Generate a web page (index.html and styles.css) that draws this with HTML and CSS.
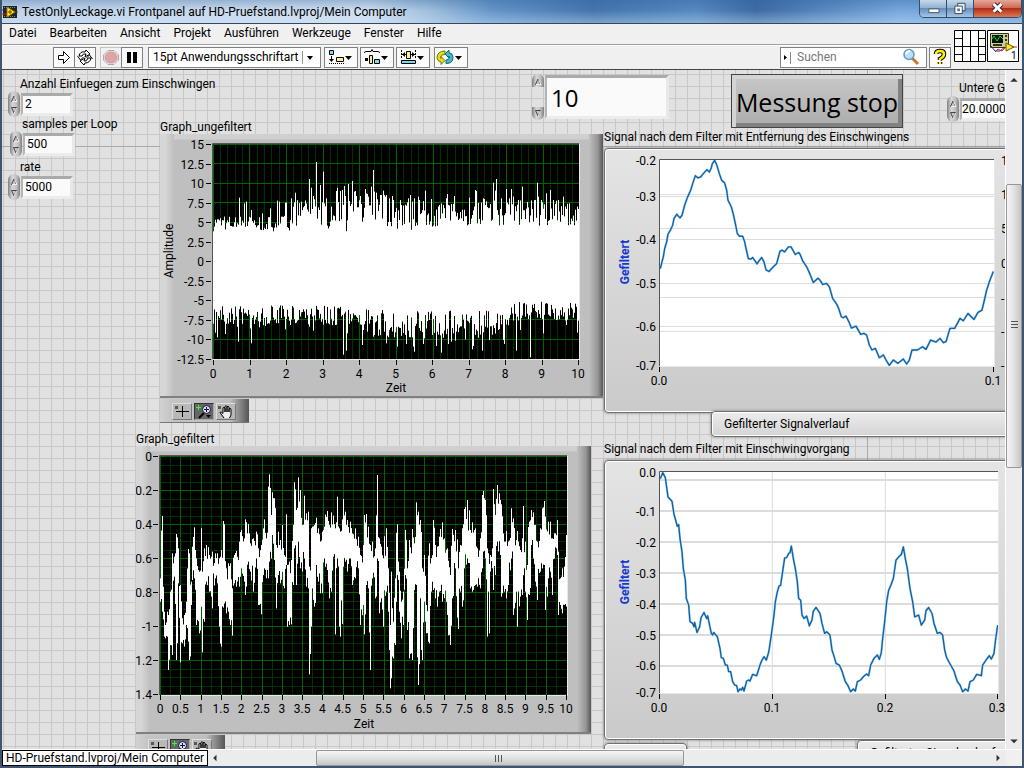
FILE: index.html
```html
<!DOCTYPE html>
<html lang="de">
<head>
    <meta charset="utf-8">
    <meta name="viewport" content="width=device-width, initial-scale=1">
    <link rel="stylesheet" href="styles.css">
    <title>TestOnlyLeckage.vi Frontpanel</title>
</head>
<body>
<svg class="defs" aria-hidden="true">
    <symbol id="up" viewBox="0 0 12 12"><path d="M3.500 9.500L6 4L8.500 9.500Z" fill="#c8c8c8" stroke="#444"/><path d="M4 9.500h5L6.500 4.500" fill="none" stroke="#eee"/></symbol>
    <symbol id="down" viewBox="0 0 12 12"><path d="M3.500 2.500L6 8L8.500 2.500Z" fill="#c8c8c8" stroke="#444"/><path d="M8.500 3L6 8.500" stroke="#eee"/></symbol>
    <symbol id="cross" viewBox="0 0 18 15"><path d="M2 2h3v3h-3z" fill="#4a6640"/><path d="M9.500 2v4M9.500 9v4M3 7.500h5M11 7.500h5M8 7.500h3M9.500 6v3" stroke="#000"/></symbol>
    <symbol id="lens" viewBox="0 0 18 15"><path d="M3.500 1v5M1 3.500h5" stroke="#3f2"/><path d="M9 9L4 14" stroke="#000" stroke-width="2"/><circle cx="11.500" cy="5.500" r="4" fill="#dde" stroke="#114"/><path d="M9 5.500h5M11.500 3v5" stroke="#114"/><path d="M11 11h5l-2.500 3z"/></symbol>
    <symbol id="hand" viewBox="0 0 18 15"><path d="M1 2h3v3h-3z" fill="#4a6640"/><path d="M7 14L3 8.500q1-1.500 3 1V4q1-1.500 2 0v4V2.500q1-1.500 2 0V8V3q1-1.500 2 0v5V5q1-1.500 2 0v6l-1.500 3" fill="#eee" stroke="#000"/></symbol>
</svg>
<div class="window">
    <header class="titlebar">
        <svg class="appIcon" viewBox="0 0 16 16"><path d="M1 2h14v12h-14z" fill="#222"/><path d="M2 3.500h12M2 12.500h12" stroke="#796" stroke-dasharray="1 1"/><path d="M0 6h5" stroke="#22c"/><path d="M0 10h5" stroke="#d22"/><path d="M5 3L13 8L5 13Z" fill="#fe2" stroke="#970"/><path d="M6 8h4M8 6v4M13 8h3" stroke="#640"/></svg>
        <h1>TestOnlyLeckage.vi Frontpanel auf HD-Pruefstand.lvproj/Mein Computer</h1>
        <div class="winButtons">
            <button aria-label="Minimieren"><svg viewBox="0 0 28 17"><path d="M9.500 8.500h11v4h-11z" fill="#fff" stroke="#456"/></svg></button>
            <button aria-label="Wiederherstellen"><svg viewBox="0 0 28 17"><path d="M11.500 2.500h8v8h-8z" fill="#def" stroke="#345"/><path d="M8.500 5.500h8v8h-8z" fill="#fff" stroke="#345"/><path d="M11 8h3v3h-3z" fill="#678"/></svg></button>
            <button class="close" aria-label="Schließen"><svg viewBox="0 0 48 17"><path d="M20 4l8 8M28 4l-8 8" stroke="#423" stroke-width="5"/><path d="M20 4l8 8M28 4l-8 8" stroke="#fff" stroke-width="3"/></svg></button>
        </div>
    </header>
    <div class="bars">
        <div class="barStack">
            <nav class="menu">
                <a href="#">Datei</a><a href="#">Bearbeiten</a><a href="#">Ansicht</a><a href="#">Projekt</a><a href="#">Ausführen</a><a href="#">Werkzeuge</a><a href="#">Fenster</a><a href="#">Hilfe</a>
            </nav>
            <div class="toolbar">
                <div class="group">
                    <button aria-label="Ausführen"><svg viewBox="0 0 20 19"><path d="M4.500 7.500h5v-4l6 6l-6 6v-4h-5z" fill="#fff" stroke="#000"/></svg></button>
                    <button aria-label="Wiederholt ausführen"><svg viewBox="0 0 20 19"><path d="M4 8q1-5 6-4l1-2l4 4l-5 3l1-3q-3-1-4 2zM16 10q-1 5-6 5l-1 2l-4-4l5-3l-1 3q3 1 4-3zM2.500 8l3 4l3-3M17.500 11l-3-4l-3 3" fill="#fff" stroke="#000"/></svg></button>
                </div>
                <div class="group">
                    <button class="dim" aria-label="Abbrechen"><svg viewBox="0 0 20 19"><path d="M7 2.500h6l4.500 4.500v5l-4.500 4.500h-6l-4.500-4.500v-5z" fill="#fff" stroke="#aaa"/><path d="M7.500 4h5l3.500 3.500v4l-3.500 3.500h-5l-3.500-3.500v-4z" fill="#dda5a5" stroke="#c99"/></svg></button>
                    <button aria-label="Pause"><svg viewBox="0 0 20 19"><path d="M5 4h4v11h-4zM11 4h4v11h-4z"/></svg></button>
                </div>
                <div class="fontBox">
                    <select aria-label="Schriftart"><option>15pt Anwendungsschriftart</option></select>
                </div>
                <button class="drop" aria-label="Objekte ausrichten"><svg viewBox="0 0 32 19"><path d="M4.500 2.500h4v4h-4z" fill="#7de" stroke="#000"/><path d="M6.500 8v5" stroke="#000"/><path d="M4 11h5l-2.500 3z"/><path d="M4 15.500h15" stroke="#000" stroke-dasharray="1 1"/><path d="M11.500 9.500h7v4h-7z" fill="#fe8" stroke="#000"/><path d="M20 8h7l-3.500 4z"/></svg></button>
                <button class="drop" aria-label="Objekte verteilen"><svg viewBox="0 0 32 19"><path d="M3 4.500l2-1h5l1-2l1 2h5l2 1" fill="none" stroke="#000"/><path d="M4 10h3v3h-3z"/><path d="M8.500 7.500h3v8h-3z" fill="#fe8" stroke="#000"/><path d="M13.500 11.500h5v4h-5z" fill="#7de" stroke="#000"/><path d="M20 8h7l-3.500 4z"/></svg></button>
                <button class="drop" aria-label="Objektgröße ändern"><svg viewBox="0 0 32 19"><path d="M4.500 2v9M18.500 2v9" stroke="#000" stroke-dasharray="2 1"/><path d="M5 6.500h4M14 6.500h4" stroke="#000"/><path d="M8 4v5l-3-2.500zM15 4v5l3-2.500z"/><path d="M9.500 3.500h4v7h-4z" fill="#fe8" stroke="#000"/><path d="M4.500 12.500h14v3h-14z" fill="#7de" stroke="#000"/><path d="M20 8h7l-3.500 4z"/></svg></button>
                <button class="drop last" aria-label="Neu ordnen"><svg viewBox="0 0 32 19"><path d="M10 3q-8 0-8 7q0 3 4 4v2.500l4-4l-4-4v2q-1-4 4-4z" fill="#dd2" stroke="#770"/><path d="M11 15.500q7 0 7-6q0-4-4-5v-2.500l-4 4l4 4v-2q2 3-3 4z" fill="#4bc" stroke="#167"/><path d="M20 8h7l-3.500 4z"/></svg></button>
                <div class="search">
                    <svg viewBox="0 0 10 19"><path d="M3 7l3 2.500l-3 2.500z"/><path d="M9.500 4v12" stroke="#888"/></svg>
                    <input type="search" placeholder="Suchen" aria-label="Suchen">
                    <svg class="glass" viewBox="0 0 18 18"><path d="M10 10l6 6" stroke="#c73" stroke-width="3"/><circle cx="7" cy="6.500" r="5" fill="#bdf" stroke="#69b" stroke-width="1.500"/><path d="M4 6q1-3 4-3" stroke="#fff" stroke-width="2" fill="none"/></svg>
                </div>
                <button class="help" aria-label="Kontexthilfe"><svg viewBox="0 0 20 19"><path d="M6 6q0-3 4-3t4 3t-4 5v1M10 14v2" fill="none" stroke="#000" stroke-width="4.500"/><path d="M6 6q0-3 4-3t4 3t-4 5v1M10 14v2" fill="none" stroke="#fe0" stroke-width="2.500"/></svg></button>
            </div>
        </div>
        <div class="viIcons">
            <svg viewBox="0 0 32 32"><path d="M.5 .5h31v31h-31z" fill="#fff" stroke="#000"/><path d="M8.500 1v30M16.500 1v30M24.500 1v30M1 16.500h30M1 8.500h7M1 24.500h7M25 8.500h6M25 24.500h6" stroke="#000"/></svg>
            <svg viewBox="0 0 32 32"><path d="M.5 .5h31v31h-31z" fill="#fff" stroke="#000"/><path d="M3.500 3.500h18v14h-18z" fill="#cc9" stroke="#331"/><path d="M5 5h11v8h-11z" fill="#010"/><path d="M5 9l2-3l3 5l3-5l3 3" fill="none" stroke="#0d3"/><path d="M18 6h2M18 10h2M6 15h9" stroke="#331" stroke-width="2"/><path d="M4 16l4 5h5l5-4" fill="none" stroke="#22a"/><path d="M8 22l3-3l4 2l4-4h11" fill="none" stroke="#d22"/><path d="M19 13v8l8-4z" fill="#ee2" stroke="#650"/><text x="24" y="29">1</text></svg>
        </div>
    </div>
    <main class="workspace">
        <div class="canvas">
            <i class="originRow"></i><i class="originCol"></i>

            <div class="object numeric n1">
                <label for="anzahl">Anzahl Einfuegen zum Einschwingen</label>
                <div class="row">
                    <span class="spin"><button aria-label="Mehr"><svg><use href="#up"/></svg></button><button aria-label="Weniger"><svg><use href="#down"/></svg></button></span>
                    <input id="anzahl" type="text" value="2">
                </div>
            </div>
            <div class="object numeric n2">
                <label for="samples">samples per Loop</label>
                <div class="row">
                    <span class="spin"><button aria-label="Mehr"><svg><use href="#up"/></svg></button><button aria-label="Weniger"><svg><use href="#down"/></svg></button></span>
                    <input id="samples" type="text" value="500">
                </div>
            </div>
            <div class="object numeric n3">
                <label for="rate">rate</label>
                <div class="row">
                    <span class="spin"><button aria-label="Mehr"><svg><use href="#up"/></svg></button><button aria-label="Weniger"><svg><use href="#down"/></svg></button></span>
                    <input id="rate" type="text" value="5000">
                </div>
            </div>
            <div class="object numeric n4">
                <label for="untere">Untere Grenzfrequenz</label>
                <div class="row">
                    <span class="spin"><button aria-label="Mehr"><svg><use href="#up"/></svg></button><button aria-label="Weniger"><svg><use href="#down"/></svg></button></span>
                    <input id="untere" type="text" value="20.0000">
                </div>
            </div>
            <div class="object numeric big">
                <div class="row">
                    <span class="spin"><button aria-label="Mehr"><svg><use href="#up"/></svg></button><button aria-label="Weniger"><svg><use href="#down"/></svg></button></span>
                    <input type="text" value="10" aria-label="Anzahl">
                </div>
            </div>
            <button class="object stop">Messung stop</button>

            <section class="object g1">
                <h2>Graph_ungefiltert</h2>
                <svg class="chart classic" id="chart1" viewBox="160 134 443 264"></svg>
                <div class="palette">
                    <button aria-label="Cursor"><svg><use href="#cross"/></svg></button><button class="on" aria-label="Zoom"><svg><use href="#lens"/></svg></button><button aria-label="Verschieben"><svg><use href="#hand"/></svg></button>
                </div>
            </section>
            <section class="object g2">
                <h2>Graph_gefiltert</h2>
                <svg class="chart classic" id="chart2" viewBox="136 446 455 288"></svg>
                <div class="palette">
                    <button aria-label="Cursor"><svg><use href="#cross"/></svg></button><button class="on" aria-label="Zoom"><svg><use href="#lens"/></svg></button><button aria-label="Verschieben"><svg><use href="#hand"/></svg></button>
                </div>
            </section>
            <section class="object g3">
                <h2>Signal nach dem Filter mit Entfernung des Einschwingens</h2>
                <svg class="chart modern" id="chart3" viewBox="605 149 432 263"></svg>
                <div class="legend">Gefilterter Signalverlauf</div>
            </section>
            <section class="object g4">
                <h2>Signal nach dem Filter mit Einschwingvorgang</h2>
                <svg class="chart modern" id="chart4" viewBox="605 461 432 278"></svg>
                <div class="legendRow"><div class="legend blank"></div><div class="legend">Gefilterter Signalverlauf</div></div>
            </section>
        </div>
        <div class="scroll vertical">
            <button aria-label="Nach oben"><svg viewBox="0 0 15 17"><path d="M4 11h7l-3.500-3.500z"/></svg></button>
            <div class="track"><div class="thumb"></div></div>
            <button aria-label="Nach unten"><svg viewBox="0 0 15 17"><path d="M4 7h7l-3.500 3.500z"/></svg></button>
        </div>
        <div class="bottom">
            <div class="target">HD-Pruefstand.lvproj/Mein Computer</div>
            <div class="scroll horizontal">
                <button aria-label="Nach links"><svg viewBox="0 0 17 17"><path d="M9 4v7l-3.500-3.500z"/></svg></button>
                <div class="track"><div class="thumb"></div></div>
                <button aria-label="Nach rechts"><svg viewBox="0 0 17 17"><path d="M7 4v7l3.500-3.500z"/></svg></button>
            </div>
        </div>
    </main>
</div>
<script src="charts.js"></script>
</body>
</html>
```
FILE: styles.css
```css
html, body { height: 100%; margin: 0; }
body { font-family: Roboto, "Open Sans", sans-serif; font-size: 12px; color: #000; overflow: hidden; }
* { box-sizing: border-box; }
button, input, select { font: inherit; color: inherit; margin: 0; padding: 0; border: 0; border-radius: 0; background: none; outline: 0; }
svg { display: block; }
h1, h2 { margin: 0; font-weight: normal; font-size: 12px; white-space: nowrap; }
.defs { position: absolute; width: 0; height: 0; }

.window { height: 100vh; display: flex; flex-direction: column; border: solid #40566e; border-width: 0 2px 2px; background: #f0f0f0; }

/* title bar */
.titlebar { height: 24px; flex: none; display: flex; align-items: center; gap: 4px; border-bottom: 1px solid #34495f; background: linear-gradient(#2f5f9a55, #ffffff00 45%, #cfe4f866), linear-gradient(90deg, #c0d3e8, #cfdff0 36%, #9dbddc 42%, #6495c8 48%, #4375ae 58%, #5689c0 68%, #3c6ba5 74%, #76a8dc 88%, #6b9fd6); }
.appIcon { width: 16px; height: 16px; }
.titlebar h1 { flex: 1; }
.winButtons { display: flex; align-self: flex-start; height: 18px; border: 1px solid #334e6c; border-top: 0; border-radius: 0 0 5px 5px; overflow: hidden; }
.winButtons button { width: 27px; border-right: 1px solid #334e6c; background: linear-gradient(#c6d8ea, #94b3d2 45%, #6890bb 50%, #a5c6e6); }
.winButtons .close { width: 47px; border: 0; background: linear-gradient(#e6a898, #cf6a56 45%, #b52c18 50%, #dc7a52); }

/* menu and toolbar */
.bars { display: flex; flex: none; height: 46px; border-bottom: 1px solid #444; }
.barStack { flex: 1; display: flex; flex-direction: column; }
.menu { height: 21px; display: flex; align-items: center; gap: 13px; padding: 0 7px 2px; border-bottom: 1px solid #a0a0a0; }
.menu a { color: #000; text-decoration: none; }
.toolbar { flex: 1; display: flex; align-items: center; padding: 0 0 1px 51px; border-top: 1px solid #fff; }
.toolbar button, .fontBox, .search { height: 21px; border: 1px solid #808080; background: #fafafa; }
.toolbar svg { flex: none; height: 19px; }
.group { display: flex; margin-right: 4px; }
.group button { width: 22px; }
.group button + button { margin-left: -1px; }
.group .dim { border-color: #c4c4c4; background: #f2f2f2; }
.group + .group { margin-right: 5px; }
.group svg { width: 20px; }
.fontBox { width: 173px; position: relative; margin-right: 3px; background: #fff; }
.fontBox select { appearance: none; width: 100%; height: 19px; padding: 0 4px; }
.fontBox::before { content: ""; position: absolute; right: 17px; top: 3px; height: 13px; border-left: 1px solid #999; }
.fontBox::after { content: ""; position: absolute; right: 7px; top: 8px; border: solid transparent; border-width: 4px 3px 0; border-top-color: #000; }
.drop { width: 34px; margin-right: 2px; }
.drop.last { margin-left: 2px; }
.drop svg { width: 32px; }
.search { width: 147px; display: flex; align-items: center; margin-left: auto; margin-right: 2px; background: #fff; }
.search svg { width: 10px; }
.search input { flex: 1; min-width: 0; padding: 0 6px; appearance: none; }
.search input::placeholder { color: #777; opacity: 1; }
.search .glass { width: 18px; height: 18px; margin-right: 6px; }
.help { width: 22px; }
.viIcons { display: flex; gap: 1px; padding: 6px 3px 0; }
.viIcons svg { width: 32px; height: 32px; }
.viIcons text { font-size: 10px; }

/* front panel */
.workspace { flex: 1; min-height: 0; display: grid; grid-template: minmax(0, 1fr) 17px / minmax(0, 1fr) 17px; }
.canvas { position: relative; overflow: hidden; background: linear-gradient(#c8c8c8 1px, transparent 1px) 0 4px / 12px 12px, linear-gradient(90deg, #c8c8c8 1px, transparent 1px) 1px 0 / 12px 12px, #e1e1e1; }
.originRow, .originCol { position: absolute; background: #aaa; }
.originRow { left: 0; right: 0; top: 76px; height: 1px; }
.originCol { top: 0; bottom: 0; left: 865px; width: 1px; }
.object { position: absolute; }

.numeric label { display: block; height: 14px; line-height: 14px; padding-left: 12px; white-space: nowrap; }
.row { display: flex; align-items: center; }
.spin { display: flex; flex-direction: column; justify-content: space-between; height: 26px; width: 12px; margin-right: 1px; }
.spin button { height: 13px; width: 12px; background: linear-gradient(90deg, #808080, #d8d8d8 35%, #c0c0c0 70%, #808080); }
.spin button:first-child { border-radius: 6px 6px 0 0; }
.spin button:last-child { border-radius: 0 0 6px 6px; }
.spin svg { width: 12px; height: 12px; }
.numeric input { width: 52px; height: 23px; padding: 0 2px; border: solid; border-width: 3px 3px 3px 2px; border-color: #aaa #e8e8e8 #ececec #b4b4b4; background: #fafafa; }
.n1 { left: 6px; top: 7px; }
.n2 { left: 8px; top: 47px; }
.n3 { left: 6px; top: 90px; }
.n4 { left: 945px; top: 11px; }
.n4 .row { margin-top: 1px; }
.n4 input { width: 90px; padding: 0; }
.big { left: 530px; top: 4px; }
.big .spin { height: 46px; }
.big input { width: 124px; height: 44px; padding-left: 4px; font-family: "Open Sans", sans-serif; font-size: 24px; }
.stop { left: 729px; top: 4px; width: 172px; height: 54px; padding-top: 2px; border: 1px solid #444; box-shadow: inset 4px 4px 0 #d4d4d4, inset -4px -4px 0 #828282; background: linear-gradient(#c8c8c8, #acacac); font-family: "Open Sans", sans-serif; font-size: 25px; white-space: nowrap; }

section h2 { height: 16px; line-height: 18px; }
.chart { overflow: hidden; }
.chart text { font-size: 12px; }
.classic { background: linear-gradient(#808080, #808080) bottom / 100% 2px no-repeat, linear-gradient(90deg, #d6d6d6 0 5px, #bfbfbf 14px) no-repeat left / 14px 100%, linear-gradient(270deg, #555, #959595 5px, #bfbfbf 14px) no-repeat right / 14px 100%, linear-gradient(#d0d0d0 5px, #bfbfbf 6px); }
.g1 { left: 158px; top: 48px; }
.g2 { left: 134px; top: 360px; }
.g1 .chart { width: 443px; height: 264px; }
.g2 .chart { width: 455px; height: 288px; }
.palette { display: flex; gap: 2px; width: 89px; height: 24px; margin-top: 1px; padding: 4px 0 0 12px; background: linear-gradient(90deg, #d2d2d2, #c4c4c4 12px, #bfbfbf 70px, #555); border-bottom: 1px solid #777; }
.palette button { width: 20px; height: 17px; border: 1px solid; border-color: #ddd #777 #777 #ddd; background: #b8b8b8; }
.palette .on { background: #666; border-color: #333 #aaa #aaa #333; }
.palette svg { width: 18px; height: 15px; }

.g3 { left: 602px; top: 59px; }
.g4 { left: 602px; top: 371px; }
.g3 h2, .g4 h2 { height: 19px; line-height: 16px; }
.modern, .legend { border: 1px solid #707070; border-radius: 4px; box-shadow: inset 0 0 0 1px #fff, 0 0 3px #777; background: linear-gradient(#e4e4e4, #cacaca); }
.modern { width: 434px; }
.g3 .chart { height: 265px; }
.g4 .chart { height: 280px; }
.modern .axisTitle { font-weight: bold; fill: #1438d0; }
.legend { position: relative; width: 327px; height: 26px; line-height: 24px; margin: -2px 0 0 107px; padding-left: 12px; background: linear-gradient(#ececec, #d4d4d4); }
.legendRow { display: flex; }
.legendRow .legend { margin: 0 0 0 170px; width: 180px; }
.legendRow .blank { width: 83px; margin: 3px 0 0; }

/* scroll bars */
.scroll { display: flex; background: #ececec; }
.scroll button { flex: none; width: 16px; height: 17px; }
.scroll svg { fill: #333; }
.track { flex: 1; position: relative; }
.thumb { position: absolute; border: 1px solid #979797; border-radius: 2px; }
.vertical { flex-direction: column; border-left: 1px solid #fff; }
.vertical .thumb { left: 0; right: 0; top: 15%; height: 44%; background: repeating-linear-gradient(#555 0 1px, transparent 1px 3px) center / 7px 9px no-repeat, linear-gradient(90deg, #f6f6f6, #e2e2e2 50%, #c6c6c6); }
.bottom { grid-column: 1 / -1; display: flex; padding-right: 16px; background: #f0f0f0; border-top: 1px solid #fff; }
.target { border: 1px solid #000; background: #fff; line-height: 14px; padding: 0 3px; white-space: nowrap; }
.horizontal { flex: 1; }
.horizontal .thumb { top: 0; bottom: 0; left: 12%; width: 48%; background: repeating-linear-gradient(90deg, #555 0 1px, transparent 1px 3px) center / 9px 7px no-repeat, linear-gradient(#f6f6f6, #e2e2e2 50%, #c6c6c6); }
```
FILE: charts.js
```js
// Traces are stored in thirds of a pixel, axes and labels in pixels.

const NS = "http://www.w3.org/2000/svg";

function add(parent, tag, attrs, text) {
    let el = document.createElementNS(NS, tag);
    for (let key in attrs) el.setAttribute(key, attrs[key]);
    if (text !== undefined) el.textContent = text;
    parent.appendChild(el);
    return el;
}

// Repeatable noise
let seed = 7;
function rnd() {
    seed = (seed * 16807) % 2147483647;
    return seed / 2147483647;
}

function plotArea(svg, x, y, w, h, box, fill) {
    add(svg, "rect", {x: x, y: y, width: w + 1, height: h + 1, fill: "#e8e8e8"});
    add(svg, "path", {d: `M${x - .5} ${y + h}V${y - .5}H${x + w}`, fill: "none", stroke: "#555"});
    add(svg, "rect", {x: x, y: y, width: w, height: h, fill: fill});
    return add(svg, "svg", {x: x, y: y, width: w, height: h, viewBox: box, preserveAspectRatio: "none"});
}

function gridLines(plot, list, vertical, color, width) {
    let d = list.map(v => vertical ? `M${v} 0V900` : `M0 ${v}H1400`).join("");
    add(plot, "path", {d: d, stroke: color, "stroke-width": width, "shape-rendering": "crispEdges"});
}

function yLabels(svg, right, labels, tick) {
    for (let [text, y] of labels) {
        add(svg, "text", {x: right, y: y + 5, "text-anchor": "end"}, text);
        if (tick) add(svg, "path", {d: `M${tick} ${y + .5}h5`, stroke: "#000"});
    }
}

function xLabels(svg, y, labels) {
    for (let [text, x] of labels) {
        add(svg, "text", {x: x, y: y + 13, "text-anchor": "middle"}, text);
        add(svg, "path", {d: `M${Math.round(x) + .5} ${y - 5}v5`, stroke: "#000"});
    }
}

function axisTitle(svg, x, y, text) {
    add(svg, "text", {class: "axisTitle", transform: `translate(${x} ${y}) rotate(-90)`, "text-anchor": "middle"}, text);
}

function range(n, f) {
    return Array.from({length: n}, (_, i) => f(i));
}

function trace(plot, points) {
    let attrs = {points: points, fill: "none", "stroke-linejoin": "round"};
    add(plot, "polyline", {...attrs, stroke: "#b8d4ea", "stroke-width": 7});
    add(plot, "polyline", {...attrs, stroke: "#0a62a8", "stroke-width": 4});
}

/**
 * Unfiltered graph: dense noise band with peaks
 */

function drawRaw() {
    let svg = document.getElementById("chart1");
    let plot = plotArea(svg, 213, 144, 366, 215, "249 42 1098 645", "#000");
    gridLines(plot, range(50, i => 249 + i * 22), true, "#003200", 3);
    gridLines(plot, range(10, i => 249 + i * 110), true, "#006400", 3);
    gridLines(plot, range(11, i => 43 + i * 58.5), false, "#006400", 3);

    let top = [328,203,343,220,349,215,364,240,397,250,421,235,442,212,448,215,466,218,469,218,482,205,490,230,496,188,514,215,523,228,538,147,544,173,550,198,553,208,559,96,568,240,571,165,580,125,583,220,589,205,604,230,619,183,622,173,631,183,637,180,643,168,646,198,655,162,658,213,667,153,673,185,676,183,679,198,691,198,694,222,706,177,709,190,712,192,715,200,724,170,730,120,733,185,739,188,742,208,751,195,754,195,760,182,763,195,766,200,769,195,778,205,787,198,790,210,811,210,835,205,841,195,853,205,865,200,868,210,886,182,904,207,949,205,952,192,964,222,973,198,1018,203,1036,180,1039,183,1060,205,1063,207,1090,158,1096,182,1099,147,1114,205,1129,177,1138,205,1144,177,1150,200,1165,210,1177,170,1216,210,1222,158,1225,200,1234,210,1249,190,1261,180,1270,210,1285,210,1300,200,1318,220,1342,230];
    let low = [256,608,262,622,286,612,322,590,325,635,361,595,364,640,388,592,406,588,466,598,481,585,538,590,550,602,595,580,616,585,640,674,649,662,652,610,697,645,700,600,712,605,730,620,763,605,769,640,800,610,802,650,829,642,850,650,853,665,880,642,883,625,919,648,934,668,955,642,964,635,976,632,1006,628,1027,658,1030,648,1057,662,1078,630,1105,600,1120,630,1123,642,1159,662,1171,600,1201,682,1240,610,1309,585,1342,608];
    let peaks = list => {
        let map = {};
        for (let i = 0; i < list.length; i += 2) map[Math.round((list[i] - 249) / 3)] = list[i + 1];
        return map;
    };
    let topMap = peaks(top), lowMap = peaks(low), d = "";
    for (let i = 0; i < 366; i++) {
        let hi = topMap[i] || (i < 80 ? 304 - rnd() * 48 : 290 - rnd() * 80 + (rnd() < .1 ? 14 : 0));
        let b = i < 160 ? 526 : i < 280 ? 540 : i < 300 ? 530 : 514;
        let lo = lowMap[i] || b + rnd() * (i < 160 || i > 300 ? 60 : 86);
        d += `M${250.5 + i * 3} ${hi}V${lo}`;
    }
    add(plot, "path", {d: d, stroke: "#fff", "stroke-width": 3});

    yLabels(svg, 204, range(12, i => [String(15 - i * 2.5), Math.round(144 + i * 19.5)]), 206);
    xLabels(svg, 365, range(11, i => [String(i), 213 + i * 36.5]));
    axisTitle(svg, 173, 251, "Amplitude");
    add(svg, "text", {x: 396, y: 392, "text-anchor": "middle"}, "Zeit");
}

/**
 * Filtered graph: one [x, high, low] triple per burst
 */

function drawFiltered() {
    let svg = document.getElementById("chart2");
    let plot = plotArea(svg, 160, 456, 407, 239, "90 93 1221 717", "#000");
    gridLines(plot, range(41, i => 91 + i * 30.5), true, "#003200", 3);
    gridLines(plot, range(29, i => 95 + i * 25.5), false, "#003200", 3);
    gridLines(plot, range(21, i => 91 + i * 61), true, "#006400", 3);
    gridLines(plot, range(7, i => 95 + i * 102), false, "#006400", 3);

    let data = [
        92,460,530, 96,273,560, 102,560,635, 106,600,640, 112,560,635, 116,570,735, 121,500,660, 127,385,690, 133,395,455, 138,327,705,
        146,370,475, 151,480,712, 158,580,655, 164,570,665, 170,530,600, 176,372,650, 179,385,705, 184,470,540, 188,365,465, 194,307,460,
        200,400,600, 208,440,625, 213,310,545, 217,440,682, 223,370,590, 230,360,470, 237,390,500, 243,395,515, 248,380,550, 255,385,460,
        262,385,475, 269,400,605, 274,375,665, 281,288,548, 288,430,565, 295,415,560, 301,415,600, 307,490,632, 313,390,475, 320,378,485,
        328,350,485, 334,315,430, 342,340,470, 347,283,510, 354,297,410, 362,355,440, 370,340,500, 378,320,400, 384,370,540, 394,360,568,
        400,310,450, 404,283,430, 410,340,460, 414,185,460, 418,148,410, 423,270,400, 428,202,330, 434,220,405, 440,360,550, 446,320,450,
        452,345,475, 458,300,440, 463,390,490, 468,268,420, 472,420,605, 478,410,600, 485,405,598, 490,300,480, 493,172,370, 499,255,480,
        505,157,350, 511,195,430, 516,300,440, 522,212,400, 528,265,485, 534,260,490, 537,425,748, 543,310,605, 548,305,490, 554,300,545,
        558,278,420, 565,310,470, 571,350,505, 577,320,505, 583,305,400, 592,258,435, 599,300,520, 604,262,500, 610,272,395, 616,310,628,
        622,215,400, 628,310,605, 632,320,635, 640,222,425, 646,260,410, 652,285,440, 660,290,400, 668,325,480, 676,310,460, 684,335,430,
        691,390,600, 699,360,540, 704,270,628, 709,267,480, 715,305,490, 721,360,735, 728,350,460, 735,370,520, 742,150,400, 748,340,565,
        755,365,520, 761,400,605, 769,310,500, 775,430,560, 781,600,790, 784,440,760, 790,590,700, 796,460,660, 801,298,450, 808,440,560,
        815,530,640, 820,500,600, 826,315,450, 831,430,615, 837,345,700, 843,385,685, 848,312,705, 854,355,495, 859,232,480, 865,260,780,
        871,285,520, 878,430,705, 884,390,530, 890,540,625, 897,355,655, 904,400,500, 909,285,495, 915,360,520, 922,365,545, 929,335,500,
        938,292,530, 944,340,520, 953,370,570, 960,450,660, 968,312,520, 976,315,430, 984,430,612, 992,360,500, 998,310,545, 1004,252,430,
        1013,225,400, 1020,315,490, 1027,292,500, 1035,310,480, 1042,370,485, 1050,340,490, 1056,210,430, 1060,198,380, 1067,225,400, 1073,370,635,
        1080,390,440, 1086,370,430, 1091,192,495, 1096,270,450, 1102,180,350, 1110,225,390, 1115,238,515, 1122,350,500, 1128,318,520, 1136,350,480,
        1143,250,400, 1150,280,570, 1158,345,500, 1163,318,605, 1170,375,515, 1177,340,510, 1181,243,450, 1187,350,500, 1192,420,585, 1197,290,510,
        1203,255,360, 1210,262,400, 1216,300,470, 1223,350,525, 1230,310,440, 1236,250,430, 1242,228,420, 1247,275,555, 1254,290,460, 1261,290,440,
        1267,340,510, 1273,325,400, 1281,285,390, 1286,380,570, 1292,460,540, 1298,430,565, 1304,425,540, 1309,330,545
    ];
    let d = "";
    for (let i = 0; i < data.length; i += 3) {
        let [x, hi, lo, nx, nhi, nlo] = data.slice(i, i + 6);
        x = Math.floor(x / 3) * 3 + 1.5;
        d += `M${x} ${hi}V${lo}`;
        // columns up to the next burst lean towards either neighbour
        for (let c = x + 3; c < nx - 1; c += 3) {
            let a = hi + (nhi - hi) * rnd() + rnd() * 40;
            let b = lo + (nlo - lo) * rnd() - rnd() * 30;
            d += `M${c} ${Math.min(a, b)}V${Math.max(a, b)}`;
        }
    }
    add(plot, "path", {d: d, stroke: "#fff", "stroke-width": 3});

    let names = ["0", "0.2", "0.4", "0.6", "0.8", "-1", "1.2", "1.4"];
    yLabels(svg, 152, names.map((t, i) => [t, 456 + i * 34]), 153);
    xLabels(svg, 700, range(21, i => [String(i / 2), 160 + i * 20.3]));
    add(svg, "text", {x: 364, y: 728, "text-anchor": "middle"}, "Zeit");
}

/**
 * Filtered signal, settling phase removed
 */

function drawSettled() {
    let svg = document.getElementById("chart3");
    let plot = plotArea(svg, 660, 160, 334, 206, "180 89 1002 619", "#fff");
    gridLines(plot, [193, 199, 295, 328, 400, 460, 502, 589, 604], false, "#dcdcdc", 3);
    trace(plot, "181,415 186,395 190,380 194,355 200,335 204,312 212,298 218,285 222,265 230,252 240,263 246,255 254,225 262,202 272,180 278,160 286,136 294,143 302,140 310,130 321,118 328,125 334,112 337,100 344,90 350,103 358,130 365,150 374,158 380,180 384,210 394,230 400,252 406,280 412,310 418,318 428,318 434,335 438,355 445,385 452,387 458,382 465,392 471,401 477,392 485,382 492,395 498,419 507,424 515,415 530,400 540,363 547,360 554,365 565,350 573,350 586,373 596,367 600,372 608,392 620,410 630,432 640,457 654,444 660,450 668,463 680,460 688,470 698,505 710,522 716,535 724,560 730,563 738,558 748,578 754,594 768,588 782,613 792,610 800,615 808,645 816,660 826,655 838,683 850,675 858,690 868,706 880,690 894,700 910,687 920,702 928,690 936,660 952,660 968,650 978,658 992,630 1008,636 1020,625 1030,638 1038,635 1050,595 1064,595 1080,565 1090,572 1104,550 1122,568 1134,547 1146,540 1152,515 1160,480 1168,455 1180,424");
    yLabels(svg, 656, [["-0.2", 160], ["-0.3", 196], ["-0.4", 239], ["-0.5", 283], ["-0.6", 326], ["-0.7", 365]]);
    xLabels(svg, 372, [["0.0", 659], ["0.1", 993]]);
    [["15", 160], ["10", 194], ["5", 228], ["0", 263], ["-5", 298], ["-10", 331], ["-15", 365]]
        .forEach(([text, y]) => add(svg, "text", {x: 1001, y: y + 5}, text));
    axisTitle(svg, 629, 262, "Gefiltert");
}

/**
 * Filtered signal with settling phase
 */

function drawSettling() {
    let svg = document.getElementById("chart4");
    let plot = plotArea(svg, 660, 472, 338, 221, "180 110 1014 664", "#fff");
    gridLines(plot, [134, 228, 321, 414, 507, 600, 692], false, "#dcdcdc", 6);
    gridLines(plot, [517, 856], true, "#dcdcdc", 3);
    trace(plot, "181,130 188,112 196,127 204,185 216,198 222,237 232,273 236,268 240,310 246,350 250,400 256,435 259,490 266,510 270,560 278,565 282,575 284,562 291,592 299,575 303,548 312,532 320,550 323,542 334,595 338,600 341,592 352,605 360,640 364,668 370,670 376,690 382,690 386,710 392,710 398,740 404,750 410,752 414,770 420,762 424,765 428,757 432,768 440,738 446,735 450,738 458,718 464,720 470,722 480,690 486,675 492,665 499,675 505,655 508,640 516,585 522,540 526,500 532,470 537,453 542,450 550,395 554,368 560,367 566,355 570,352 574,333 580,370 586,400 592,440 596,490 602,495 606,540 612,550 620,543 628,572 636,555 640,528 648,517 660,535 666,565 674,595 680,590 690,600 696,645 704,670 708,685 718,690 726,708 736,740 744,752 752,770 760,762 766,768 772,740 782,735 790,725 800,717 806,722 812,690 822,670 832,660 838,673 844,652 848,610 854,560 860,500 866,465 872,452 880,430 888,375 896,365 904,358 910,335 916,370 922,400 930,460 938,500 944,545 956,540 964,570 974,555 978,527 986,517 996,535 1002,565 1012,595 1020,592 1028,600 1034,645 1040,668 1052,690 1062,708 1072,740 1080,750 1088,770 1096,762 1104,768 1110,740 1120,735 1130,718 1144,722 1148,690 1158,675 1168,662 1174,672 1182,655 1186,620 1193,570");
    yLabels(svg, 656, range(8, i => [(i ? "-" : "") + (i / 10).toFixed(1), i ? Math.round(480 + i * 30.9) - (i === 7 ? 4 : 0) : 472]));
    xLabels(svg, 699, [["0.0", 659], ["0.1", 772], ["0.2", 885], ["0.3", 997]]);
    axisTitle(svg, 629, 582, "Gefiltert");
}

drawRaw();
drawFiltered();
drawSettled();
drawSettling();
```
